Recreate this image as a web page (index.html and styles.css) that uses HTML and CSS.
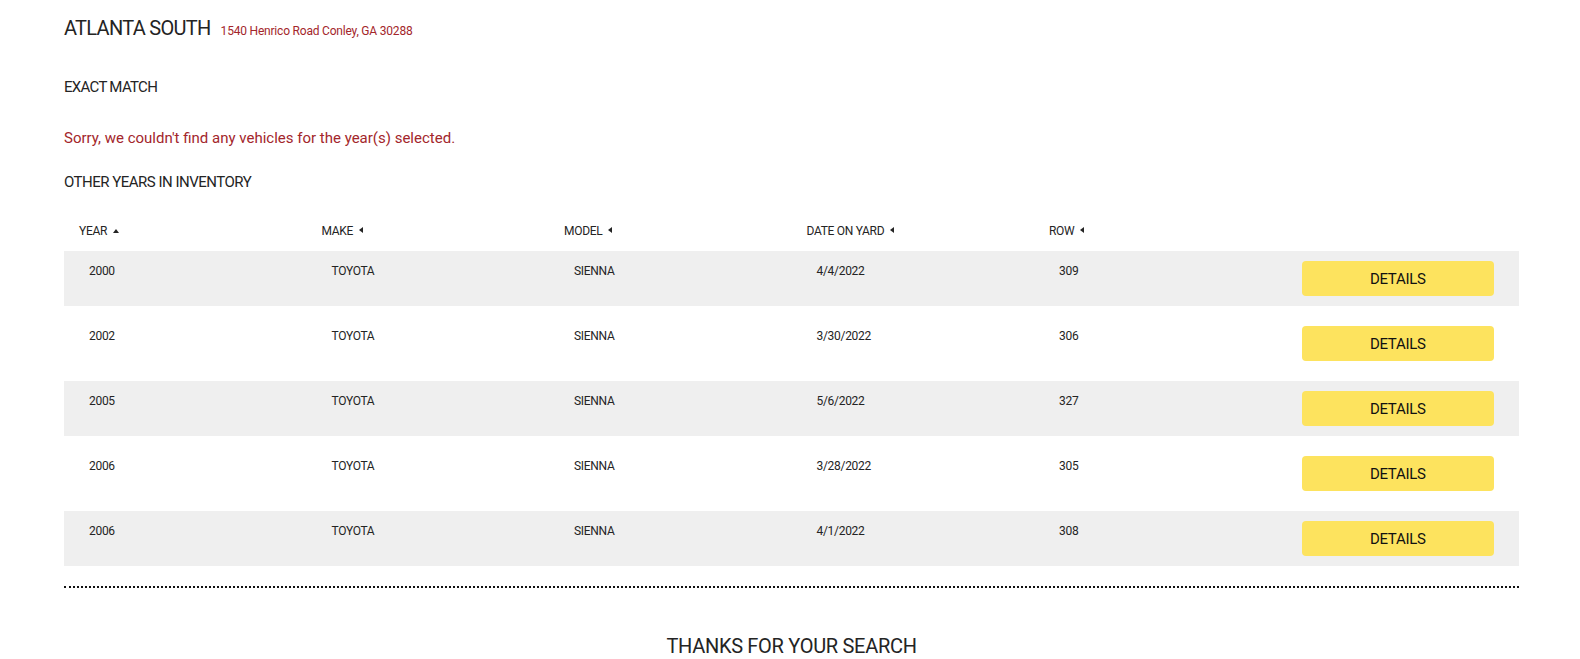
FILE: index.html
```html
<!DOCTYPE html>
<html lang="en">
<head>
    <meta charset="UTF-8">
    <meta name="viewport" content="width=device-width, initial-scale=1.0">
    <title>Atlanta South - Inventory</title>
    <link rel="stylesheet" href="styles.css">
</head>
<body>
    <div class="container">
        <div class="location">
            <h1 class="location-name">ATLANTA SOUTH</h1>
            <span class="location-address">1540 Henrico Road Conley, GA 30288</span>
        </div>

        <h2 class="section-title exact">EXACT MATCH</h2>
        <p class="no-results">Sorry, we couldn't find any vehicles for the year(s) selected.</p>

        <h2 class="section-title other">OTHER YEARS IN INVENTORY</h2>

        <table class="inventory">
            <thead>
                <tr>
                    <th><span class="sort sort-up">YEAR</span></th>
                    <th><span class="sort">MAKE</span></th>
                    <th><span class="sort">MODEL</span></th>
                    <th><span class="sort">DATE ON YARD</span></th>
                    <th><span class="sort">ROW</span></th>
                    <th></th>
                </tr>
            </thead>
            <tbody>
                <tr>
                    <td>2000</td>
                    <td>TOYOTA</td>
                    <td>SIENNA</td>
                    <td>4/4/2022</td>
                    <td>309</td>
                    <td class="action"><button class="details-button">DETAILS</button></td>
                </tr>
                <tr>
                    <td>2002</td>
                    <td>TOYOTA</td>
                    <td>SIENNA</td>
                    <td>3/30/2022</td>
                    <td>306</td>
                    <td class="action"><button class="details-button">DETAILS</button></td>
                </tr>
                <tr>
                    <td>2005</td>
                    <td>TOYOTA</td>
                    <td>SIENNA</td>
                    <td>5/6/2022</td>
                    <td>327</td>
                    <td class="action"><button class="details-button">DETAILS</button></td>
                </tr>
                <tr>
                    <td>2006</td>
                    <td>TOYOTA</td>
                    <td>SIENNA</td>
                    <td>3/28/2022</td>
                    <td>305</td>
                    <td class="action"><button class="details-button">DETAILS</button></td>
                </tr>
                <tr>
                    <td>2006</td>
                    <td>TOYOTA</td>
                    <td>SIENNA</td>
                    <td>4/1/2022</td>
                    <td>308</td>
                    <td class="action"><button class="details-button">DETAILS</button></td>
                </tr>
            </tbody>
        </table>

        <hr class="divider">

        <h2 class="thanks">THANKS FOR YOUR SEARCH</h2>
    </div>
</body>
</html>
```

FILE: styles.css
```css
:root {
    --text-color: #242424;
    --accent-red: #a3262b;
    --row-gray: #efefef;
    --button-yellow: #fde35e;
}

body {
    margin: 0;
    color: var(--text-color);
    font-family: Roboto, "Liberation Sans", sans-serif;
    background: #ffffff;
}

.container {
    margin: 0 61px 0 64px;
}

.location {
    display: flex;
    align-items: baseline;
    gap: 10px;
    padding-top: 13px;
}

.location-name {
    margin: 0;
    font-size: 20px;
    line-height: 30px;
    font-weight: normal;
    letter-spacing: -0.7px;
}

.location-address {
    font-size: 12px;
    letter-spacing: -0.2px;
    color: var(--accent-red);
}

.section-title {
    margin: 0;
    font-size: 15px;
    line-height: 24px;
    font-weight: normal;
}

.exact {
    margin-top: 32px;
    letter-spacing: -0.7px;
}

.no-results {
    margin: 27px 0 0;
    font-size: 15px;
    line-height: 24px;
    color: var(--accent-red);
}

.other {
    margin-top: 20px;
    letter-spacing: -0.5px;
}

.inventory {
    width: 100%;
    table-layout: fixed;
    border-collapse: separate;
    border-spacing: 0 10px;
    margin-top: 5px;
    font-size: 12px;
    letter-spacing: -0.3px;
}

.inventory th {
    text-align: left;
    font-weight: normal;
    padding: 14px 0 2px 15px;
    line-height: 16px;
}

.sort::after {
    content: "";
    display: inline-block;
    margin-left: 6px;
    vertical-align: 2px;
    border-top: 3px solid transparent;
    border-bottom: 3px solid transparent;
    border-right: 4px solid var(--text-color);
}

.sort-up::after {
    border-left: 3px solid transparent;
    border-right: 3px solid transparent;
    border-top: none;
    border-bottom: 4px solid var(--text-color);
}

.inventory tbody tr {
    height: 55px;
}

.inventory tbody tr:nth-child(odd) td {
    background: var(--row-gray);
}

.inventory td {
    vertical-align: top;
    padding: 12px 0 0 25px;
    line-height: 16px;
}

.inventory td.action {
    padding: 10px 0 0;
    text-align: center;
}

.details-button {
    width: 192px;
    height: 35px;
    border: none;
    border-radius: 4px;
    background: var(--button-yellow);
    color: #111111;
    font-family: inherit;
    font-size: 15px;
    letter-spacing: -0.3px;
    cursor: pointer;
}

.divider {
    margin: 10px 0 0;
    border: none;
    border-top: 2px dotted #111111;
}

.thanks {
    margin: 43px 0 0;
    text-align: center;
    font-size: 20px;
    line-height: 30px;
    font-weight: normal;
    letter-spacing: -0.3px;
}
```
